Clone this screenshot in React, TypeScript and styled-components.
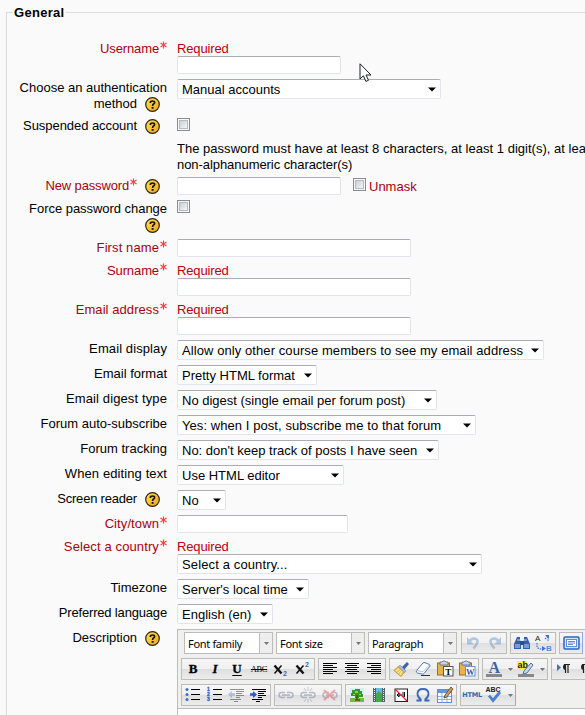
import React from "react";
import styled, { createGlobalStyle, css } from "styled-components";

const GlobalStyle = createGlobalStyle`
  *, *::before, *::after { box-sizing: border-box; }
  body {
    margin: 0;
    background: #fafafa;
    color: #000;
    font: 13px/16px "Liberation Sans", Arial, sans-serif;
    overflow: hidden;
  }
`;

const Page = styled.main`
  position: relative;
  width: 585px;
  height: 715px;
  overflow: hidden;
  padding: 4px 0 0 6px;
`;

const Fieldset = styled.fieldset`
  width: 640px;
  height: 740px;
  margin: 0;
  padding: 21px 0 0;
  border: 1px solid #ddd;
  min-width: 0;
`;

const Legend = styled.legend`
  margin-left: 6px;
  padding: 0 1px;
  height: 16px;
  line-height: 18px;
  font-weight: bold;
  letter-spacing: 0.3px;
`;

const Row = styled.div<{ $h: number }>`
  display: flex;
  height: ${(p) => p.$h}px;
`;

const Label = styled.div<{ $required?: boolean; $drop?: number; $ls?: number }>`
  width: 160px;
  flex: none;
  margin-right: 10px;
  padding-top: ${(p) => p.$drop ?? 1}px;
  letter-spacing: ${(p) => p.$ls ?? 0}px;
  color: ${(p) => (p.$required ? "#a9000f" : "#000")};
`;

const LabelLine = styled.div`
  display: flex;
  justify-content: flex-end;
  height: 16px;
  white-space: nowrap;
`;

const Value = styled.div`
  flex: none;
  white-space: nowrap;
`;

const Inline = styled.div`
  display: flex;
  align-items: flex-start;
`;

const ErrorText = styled.div`
  height: 15px;
  line-height: 16px;
  color: #b90010;
  letter-spacing: -0.15px;
`;

const Note = styled.div<{ $ls?: number }>`
  letter-spacing: ${(p) => p.$ls ?? 0}px;
`;

const fieldBox = css`
  background: #fff;
  border: 1px solid #e1e4ec;
  border-top-color: #abadb3;
  border-radius: 2px;
`;

const TextInput = styled.input<{ $w: number }>`
  ${fieldBox}
  display: block;
  width: ${(p) => p.$w}px;
  height: 18px;
  padding: 0 4px;
  outline: none;
`;

const SelectBox = styled.div<{ $w: number; $ls?: number }>`
  ${fieldBox}
  display: flex;
  align-items: center;
  justify-content: space-between;
  width: ${(p) => p.$w}px;
  height: 20px;
  padding: 1px 4px 0;
  letter-spacing: ${(p) => p.$ls ?? 0}px;
`;

const CheckFrame = styled.span`
  flex: none;
  display: block;
  width: 13px;
  height: 13px;
  padding: 1px;
  border: 1px solid #8a8b8d;
  background: #f8f8f8;
  &::after {
    content: "";
    display: block;
    width: 9px;
    height: 9px;
    border: 1px solid #b4bac2;
    background: linear-gradient(135deg, #cbcfd5, #f6f6f6);
  }
`;

const UnmaskLabel = styled.span`
  display: flex;
  gap: 3px;
  margin: 1px 0 0 12px;
  color: #a9000f;
`;

const UnmaskText = styled.span`
  padding-top: 1px;
`;

const HelpSvg = styled.svg`
  flex: none;
  width: 15px;
  height: 15px;
  margin: 1px 7px 0 8px;
`;

const StarSvg = styled.svg`
  flex: none;
  width: 8px;
  height: 8px;
`;

function Help() {
  return (
    <HelpSvg viewBox="0 0 15 15">
      <defs>
        <linearGradient id="gold" x1="0" y1="0" x2="1" y2="1">
          <stop offset="0" stopColor="#ffe35a" />
          <stop offset="1" stopColor="#f0a31c" />
        </linearGradient>
      </defs>
      <circle cx="7.5" cy="7.5" r="6.8" fill="url(#gold)" stroke="#2c230b" strokeWidth="1.2" />
      <path d="M5.4 6V5.2Q5.4 4 7.5 4T9.6 5.5Q9.6 6.5 8.5 7.1Q7.6 7.6 7.6 8.9" fill="none" stroke="#1a1608" strokeWidth="1.7" />
      <path d="M6.6 10h2v1.8h-2z" fill="#1a1608" />
    </HelpSvg>
  );
}

function Star() {
  return (
    <StarSvg viewBox="0 0 8 8">
      <path d="M4.5 .5V7.5M1.5 2L7.5 6M7.5 2L1.5 6" stroke="#ff3b3b" strokeWidth="1.1" fill="none" />
    </StarSvg>
  );
}

function Arrow() {
  return (
    <svg width="8" height="5" viewBox="0 0 8 5">
      <path d="M0 .4H8L4 4.6Z" fill="#000" />
    </svg>
  );
}

type SelectProps = { w: number; ls?: number; children: React.ReactNode };
function Select({ w, ls, children }: SelectProps) {
  return (
    <SelectBox $w={w} $ls={ls}>
      <span>{children}</span>
      <Arrow />
    </SelectBox>
  );
}

type FieldProps = {
  h: number;
  label?: string[];
  required?: boolean;
  help?: boolean;
  drop?: number;
  ls?: number;
  children?: React.ReactNode;
};
function Field({ h, label = [], required, help, drop, ls, children }: FieldProps) {
  return (
    <Row $h={h}>
      <Label $required={required} $drop={drop} $ls={ls}>
        {label.map((line, i) => (
          <LabelLine key={i}>
            {line}
            {required && <Star />}
            {help && i === label.length - 1 && <Help />}
          </LabelLine>
        ))}
      </Label>
      <Value>{children}</Value>
    </Row>
  );
}

/* ---------- rich text editor ---------- */

const Editor = styled.div`
  width: 470px;
  height: 110px;
  border: 1px solid #bbb;
  background: #fff;
`;

const Toolbars = styled.div`
  height: 79px;
  padding-top: 2px;
  display: flex;
  flex-direction: column;
  gap: 4px;
  background: #f0f0ee;
  border-bottom: 1px solid #bbb;
`;

const Bar = styled.div<{ $indent?: number }>`
  display: flex;
  gap: 3px;
  height: 22px;
  padding-left: ${(p) => p.$indent ?? 3}px;
`;

const Group = styled.div<{ $push?: boolean; $accent?: boolean }>`
  flex: none;
  display: flex;
  height: 22px;
  margin-left: ${(p) => (p.$push ? 1 : 0)}px;
  border: 1px solid #bcbcbc;
  border-right-color: ${(p) => (p.$accent ? "#8fa9d8" : "#bcbcbc")};
  background: linear-gradient(#f6f6f6 0, #f0f0f0 48%, #dfdfdf 52%, #ececec 100%);
`;

const Tool = styled.span<{ $dim?: boolean }>`
  flex: none;
  display: flex;
  width: 22px;
  height: 20px;
  align-items: center;
  justify-content: center;
  opacity: ${(p) => (p.$dim ? 0.4 : 1)};
`;

const Drop = styled.span`
  flex: none;
  width: 10px;
  display: flex;
  align-items: center;
  justify-content: center;
`;

const ListBox = styled.div`
  flex: none;
  display: flex;
  width: 89px;
  height: 22px;
  border: 1px solid #bcbcbc;
  background: #fff;
  font: 11px/21px "Noto Sans", "Open Sans", sans-serif;
  letter-spacing: -0.32px;
`;

const ListText = styled.span`
  flex: 1;
  padding-left: 3px;
  line-height: 22px;
`;

const ListArrow = styled.span`
  width: 13px;
  display: flex;
  align-items: center;
  justify-content: center;
  border-left: 1px solid #bcbcbc;
  background: #eee;
`;

const Glyph = styled.span<{ $kind: "b" | "i" | "u" }>`
  font: bold 13px/18px "Liberation Serif", serif;
  -webkit-text-stroke: 0.3px #000;
  ${(p) => p.$kind === "i" && "font-style: italic;"}
  ${(p) => p.$kind === "u" && "text-decoration: underline; text-underline-offset: 2px;"}
`;

const Strike = styled.span`
  font: 8.5px/12px "Liberation Serif", serif;
  letter-spacing: -0.4px;
  text-decoration: line-through;
`;

const HtmlMark = styled.span`
  font: bold 6.5px/10px "DejaVu Sans", sans-serif;
  letter-spacing: -0.2px;
  color: #3664ad;
`;

function SmallArrow() {
  return (
    <svg width="5" height="3" viewBox="0 0 5 3">
      <path d="M0 0H5L2.5 3Z" fill="#777" />
    </svg>
  );
}

function Icon({ children }: { children: React.ReactNode }) {
  return (
    <svg width="20" height="20" viewBox="0 0 20 20" fill="none">
      {children}
    </svg>
  );
}

function Align({ kind }: { kind: "left" | "center" | "right" }) {
  const widths = [14, 10, 14, 10, 14, 10];
  return (
    <Icon>
      {widths.map((w, i) => {
        const x = kind === "left" ? 3 : kind === "center" ? 3 + (14 - w) / 2 : 17 - w;
        return <rect key={i} x={x} y={4 + i * 2} width={w} height="1" fill="#000" />;
      })}
    </Icon>
  );
}

function Script({ up }: { up?: boolean }) {
  return (
    <Icon>
      <path d="M3.5 6.5l7 8" stroke="#111" strokeWidth="2.4" />
      <path d="M10.5 6.5l-7 8" stroke="#111" strokeWidth="1.5" />
      <text x="12" y={up ? 8 : 17} fontSize="7" fontWeight="bold" fontFamily="Liberation Sans" fill="#3367c0">2</text>
    </Icon>
  );
}

function BulletList({ numbered }: { numbered?: boolean }) {
  return (
    <Icon>
      {[4, 9, 14].map((y, i) => (
        <React.Fragment key={y}>
          {numbered ? (
            <text x="2" y={y + 2.4} fontSize="5" fontWeight="bold" fontFamily="Liberation Sans" stroke="#2f62bd" strokeWidth=".3" fill="#2f62bd">{i + 1}</text>
          ) : (
            <circle cx="4" cy={y + 0.5} r="1.5" fill="#3a6fc9" />
          )}
          <rect x="8" y={y} width="9" height="1" fill="#000" />
        </React.Fragment>
      ))}
    </Icon>
  );
}

function Indent({ out }: { out?: boolean }) {
  return (
    <Icon>
      <path d="M3 4.5H17M9 6.5H17M9 8.5H15M9 10.5H17M9 12.5H13M3 14.5H14M7 16.5H11" stroke="#000" strokeWidth="1" />
      {out ? <path d="M1 9.5L5 6v2.2h3v2.6H5V13Z" fill="#477bd1" /> : <path d="M8 9.5L4 6v2.2H1v2.6h3V13Z" fill="#235bd0" />}
    </Icon>
  );
}

function Chain({ mode }: { mode: "link" | "anchor" | "cut" }) {
  return (
    <Icon>
      <path d="M9 7.5H5.5a2.5 2.5 0 0 0 0 5H9M11 7.5h3.5a2.5 2.5 0 0 1 0 5H11M6 10h8" stroke="#5b6f92" strokeWidth="1.5" />
      {mode === "anchor" && <path d="M6 3l2 3M10 2v4M14 3l-2 3M6 17l2-3M10 18v-4M14 17l-2-3" stroke="#6d82a5" />}
      {mode === "cut" && <path d="M4 5l11 10M15 5L4 15" stroke="#f22d2d" strokeWidth="2" />}
    </Icon>
  );
}

function Undo({ redo }: { redo?: boolean }) {
  return (
    <Icon>
      <g transform={redo ? "translate(20 0) scale(-1 1)" : undefined}>
        <path d="M6 9Q9 4 13 6T10.5 15.5" stroke="#5285c4" strokeWidth="2.4" />
        <path d="M4 4v7.5h7Z" fill="#5285c4" />
      </g>
    </Icon>
  );
}

function Binoculars() {
  return (
    <Icon>
      <path d="M5 4h3v3l1 2v7H2v-5ZM12 4h3l3 7v5h-7V9l1-2Z" fill="#325fa6" />
      <path d="M8 8h4v4H8z" fill="#284f90" />
      <path d="M5 7h3M12 7h3M3 12h5M12 12h5M3 14h5M12 14h5" stroke="#c2d8f5" />
    </Icon>
  );
}

function Replace() {
  return (
    <Icon>
      <text x="1" y="8" fontSize="8" fontFamily="Liberation Sans" fill="#222">A</text>
      <text x="12" y="18" fontSize="8" fontWeight="bold" fontFamily="Liberation Sans" fill="#5a8ce0">B</text>
      <path d="M3 10v4q1 2 5 2M11 6l3-3v6" stroke="#3a75da" strokeWidth="1.2" strokeDasharray="1.5 1" />
      <path d="M11 2h4v4ZM8 13v5l4-2.5Z" fill="#3a75da" />
    </Icon>
  );
}

function FullScreen() {
  return (
    <Icon>
      <rect x="3" y="4" width="15" height="12" rx="1" fill="#d2e3fa" stroke="#2f67bd" strokeWidth="1.5" />
      <rect x="5.5" y="6.5" width="10" height="7" fill="#fff" stroke="#5b90df" />
      <path d="M7 8.5h7M7 10h7M7 11.5h5" stroke="#3a75ce" strokeWidth=".8" />
    </Icon>
  );
}

function Broom() {
  return (
    <Icon>
      <path d="M11 8l5-5 2 2-5 6Z" fill="#3f63a5" />
      <path d="M9 6l6 6-2 2-6-6Z" fill="#a9bbdc" stroke="#6079a9" strokeWidth=".5" />
      <path d="M7 7.5l6 6-3 4-7-6Z" fill="#efc75b" stroke="#b88724" strokeWidth=".7" />
      <path d="M5 12l3-2M7 14l3-3M9 16l2-4" stroke="#fff1b0" />
    </Icon>
  );
}

function Eraser() {
  return (
    <Icon>
      <path d="M3.5 11.5L10 4q1-.8 2-.3l4 1.6q1.600.7.8 2L11 14.500q-.6.700-1.500.6L4.500 14q-2-.8-1-2.500Z" fill="#fff" stroke="#5279b7" />
      <path d="M3.500 11.500l6.500 1.200 6.500-7" stroke="#a6c1e8" />
      <path d="M8 16.500h9" stroke="#333" />
    </Icon>
  );
}

function Paste({ word }: { word?: boolean }) {
  return (
    <Icon>
      <rect x="2.5" y="4" width="12" height="12" fill="#eab14c" stroke="#a66f16" />
      <path d="M5 3h2l1-1h2l1 1h2v3H5Z" fill="#ccd4e1" stroke="#596780" strokeWidth=".8" />
      <rect x="8.5" y="7.5" width="9.5" height="9.5" fill="#fff" stroke={word ? "#6a92d5" : "#555"} />
      <text x={word ? 9 : 10.2} y="15.5" fontSize={word ? 8.5 : 9} fontWeight="bold" fontFamily="Liberation Serif" fill={word ? "#2859b1" : "#000"}>{word ? "W" : "T"}</text>
    </Icon>
  );
}

function ColorA() {
  return (
    <Icon>
      <text x="4.5" y="14" fontSize="16" fontWeight="bold" fontFamily="Liberation Serif" fill="#3f65a1">A</text>
      <rect x="2" y="15" width="16" height="3" fill="#888" />
    </Icon>
  );
}

function Highlight() {
  return (
    <Icon>
      <rect x="1" y="2" width="10" height="9" fill="#ffef4a" />
      <text x="1.5" y="9" fontSize="9" fontWeight="bold" fontFamily="Liberation Sans" fill="#222">ab</text>
      <path d="M8 12l7-8 2 2-6 8-4 1Z" fill="#c7d9ee" stroke="#4f6f9d" />
      <rect x="2" y="15" width="16" height="3" fill="#888" />
    </Icon>
  );
}

function Pilcrow({ rtl }: { rtl?: boolean }) {
  return (
    <Icon>
      {!rtl && <path d="M4 5v7l4-3.5Z" fill="#3c72c2" />}
      <path d={rtl ? "M9 5a3 3 0 0 0 0 6Z" : "M13 5a3 3 0 0 0 0 6Z"} fill="#222" />
      <path d={rtl ? "M7 5.5h6M8.5 5v9M11 5v9" : "M11 5.5h6M12.5 5v9M15 5v9"} stroke="#222" strokeWidth="1.2" />
    </Icon>
  );
}

function Picture() {
  return (
    <Icon>
      <path d="M3 3h14v14H3z" fill="#d7edfb" />
      <path d="M3 13h14v4H3z" fill="#72bc3b" />
      <path d="M5 5h3V4h5v2h2v3h1v3h-4v1H8v-2H4V8h1Z" fill="#36962b" />
      <path d="M8 6h3v2H8zM6 9h2v1H6zM12 9h2v1h-2z" fill="#96d33c" />
      <path d="M10 10v5M8 15h5" stroke="#704710" strokeWidth="1.6" />
    </Icon>
  );
}

function Film() {
  return (
    <Icon>
      <path d="M4 3h12v14H4z" fill="#50626a" />
      <path d="M7 3h6v14H7z" fill="#5fbee2" />
      <path d="M7 9l3-3 3 3v8H7z" fill="#45a64e" />
      <path d="M5.5 3v14M14.5 3v14" stroke="#e5eee7" strokeDasharray="1 1" />
    </Icon>
  );
}

function NoBreak() {
  return (
    <Icon>
      <rect x="4" y="4" width="12.5" height="12.5" fill="#fff" stroke="#222" />
      <path d="M6 10h5M6 10l2-2v4ZM12 7v5M13.5 7v5" stroke="#111" strokeWidth="1" />
      <path d="M4.5 4.5l11.5 11.5" stroke="#e8202e" strokeWidth="1.3" />
    </Icon>
  );
}

function Omega() {
  return (
    <Icon>
      <path d="M3.5 15.5h4.2v-1.2Q4.5 12 4.5 8.8 4.5 4 10 4t5.5 4.8Q15.5 12 12.3 14.3v1.2h4.2" stroke="#3768bb" strokeWidth="1.8" />
    </Icon>
  );
}

function TablePencil() {
  return (
    <Icon>
      <rect x="2.5" y="4.5" width="14" height="13" fill="#fff" stroke="#5f8fd0" />
      <path d="M3 5h13v3H3z" fill="#6398dd" />
      <path d="M3 11.5h13M3 14.5h13M7 8v9M12 8v9" stroke="#8db0df" />
      <path d="M9 13l1-3 6-8 2 2-6 8Z" fill="#d49b55" stroke="#56422c" strokeWidth=".8" />
    </Icon>
  );
}

function SpellCheck() {
  return (
    <Icon>
      <text x="1.5" y="7" fontSize="7" fontWeight="bold" fontFamily="Liberation Sans" fill="#222">ABC</text>
      <path d="M5 10.500l4 5 7-8.500" stroke="#4b7fd1" strokeWidth="2.800" />
    </Icon>
  );
}

function ListSelect({ children }: { children: React.ReactNode }) {
  return (
    <ListBox>
      <ListText>{children}</ListText>
      <ListArrow><SmallArrow /></ListArrow>
    </ListBox>
  );
}

function RichEditor() {
  return (
    <Editor>
      <Toolbars>
        <Bar $indent={6}>
          <ListSelect>Font family</ListSelect>
          <ListSelect>Font size</ListSelect>
          <ListSelect>Paragraph</ListSelect>
          <Group $push>
            <Tool $dim><Undo /></Tool>
            <Tool $dim><Undo redo /></Tool>
          </Group>
          <Group>
            <Tool><Binoculars /></Tool>
            <Tool><Replace /></Tool>
          </Group>
          <Group $accent><Tool><FullScreen /></Tool></Group>
        </Bar>
        <Bar>
          <Group>
            <Tool><Glyph $kind="b">B</Glyph></Tool>
            <Tool><Glyph $kind="i">I</Glyph></Tool>
            <Tool><Glyph $kind="u">U</Glyph></Tool>
            <Tool><Strike>ABC</Strike></Tool>
            <Tool><Script /></Tool>
            <Tool><Script up /></Tool>
          </Group>
          <Group>
            <Tool><Align kind="left" /></Tool>
            <Tool><Align kind="center" /></Tool>
            <Tool><Align kind="right" /></Tool>
          </Group>
          <Group>
            <Tool><Broom /></Tool>
            <Tool><Eraser /></Tool>
            <Tool><Paste /></Tool>
            <Tool><Paste word /></Tool>
          </Group>
          <Group>
            <Tool><ColorA /></Tool>
            <Drop><SmallArrow /></Drop>
            <Tool><Highlight /></Tool>
            <Drop><SmallArrow /></Drop>
          </Group>
          <Group>
            <Tool><Pilcrow /></Tool>
            <Tool><Pilcrow rtl /></Tool>
          </Group>
        </Bar>
        <Bar>
          <Group>
            <Tool><BulletList /></Tool>
            <Tool><BulletList numbered /></Tool>
            <Tool $dim><Indent out /></Tool>
            <Tool><Indent /></Tool>
          </Group>
          <Group>
            <Tool $dim><Chain mode="link" /></Tool>
            <Tool $dim><Chain mode="anchor" /></Tool>
            <Tool $dim><Chain mode="cut" /></Tool>
          </Group>
          <Group>
            <Tool><Picture /></Tool>
            <Tool><Film /></Tool>
            <Tool><NoBreak /></Tool>
            <Tool><Omega /></Tool>
            <Tool><TablePencil /></Tool>
          </Group>
          <Group $accent>
            <Tool><HtmlMark>HTML</HtmlMark></Tool>
            <Tool><SpellCheck /></Tool>
            <Drop><SmallArrow /></Drop>
          </Group>
        </Bar>
      </Toolbars>
    </Editor>
  );
}

const Pointer = styled.svg`
  position: absolute;
  left: 359px;
  top: 63px;
  width: 13px;
  height: 20px;
`;

export default function App() {
  return (
    <Page>
      <GlobalStyle />
      <Fieldset>
        <Legend>General</Legend>
        <Field h={38} drop={0} label={["Username"]} required ls={-0.12}>
          <ErrorText>Required</ErrorText>
          <TextInput $w={164} />
        </Field>
        <Field h={39} label={["Choose an authentication", "method"]} help>
          <Select w={264}>Manual accounts</Select>
        </Field>
        <Field h={23} drop={0} label={["Suspended account"]} help ls={-0.06}>
          <CheckFrame />
        </Field>
        <Field h={36}>
          <Note $ls={0.02}>The password must have at least 8 characters, at least 1 digit(s), at lea</Note>
          <Note $ls={-0.06}>non-alphanumeric character(s)</Note>
        </Field>
        <Field h={23} label={["New password"]} required help ls={-0.15}>
          <Inline>
            <TextInput $w={164} />
            <UnmaskLabel>
              <CheckFrame />
              <UnmaskText>Unmask</UnmaskText>
            </UnmaskLabel>
          </Inline>
        </Field>
        <Field h={39} label={["Force password change", ""]} help ls={-0.04}>
          <CheckFrame />
        </Field>
        <Field h={24} label={["First name"]} required ls={0.1}>
          <TextInput $w={234} />
        </Field>
        <Field h={39} drop={0} label={["Surname"]} required ls={-0.1}>
          <ErrorText>Required</ErrorText>
          <TextInput $w={234} />
        </Field>
        <Field h={38} drop={0} label={["Email address"]} required ls={0.07}>
          <ErrorText>Required</ErrorText>
          <TextInput $w={234} />
        </Field>
        <Field h={25} label={["Email display"]} ls={0.1}>
          <Select w={367} ls={0.08}>Allow only other course members to see my email address</Select>
        </Field>
        <Field h={25} label={["Email format"]}>
          <Select w={140}>Pretty HTML format</Select>
        </Field>
        <Field h={25} label={["Email digest type"]} ls={0.12}>
          <Select w={260}>No digest (single email per forum post)</Select>
        </Field>
        <Field h={25} label={["Forum auto-subscribe"]}>
          <Select w={299} ls={0.07}>Yes: when I post, subscribe me to that forum</Select>
        </Field>
        <Field h={25} label={["Forum tracking"]}>
          <Select w={262}>No: don't keep track of posts I have seen</Select>
        </Field>
        <Field h={25} label={["When editing text"]} ls={0.1}>
          <Select w={167}>Use HTML editor</Select>
        </Field>
        <Field h={25} label={["Screen reader"]} help ls={-0.2}>
          <Select w={49}>No</Select>
        </Field>
        <Field h={24} label={["City/town"]} required ls={0.1}>
          <TextInput $w={171} />
        </Field>
        <Field h={40} drop={0} label={["Select a country"]} required ls={0.12}>
          <ErrorText>Required</ErrorText>
          <Select w={305} ls={0.13}>Select a country...</Select>
        </Field>
        <Field h={25} label={["Timezone"]}>
          <Select w={132}>Server's local time</Select>
        </Field>
        <Field h={25} label={["Preferred language"]} ls={-0.17}>
          <Select w={96}>English (en)</Select>
        </Field>
        <Field h={111} label={["Description"]} help ls={-0.05}>
          <RichEditor />
        </Field>
      </Fieldset>
      <Pointer viewBox="0 0 13 20">
        <path d="M1 .8V16l3.400-3.200 2.500 5.600 2.600-1.100L7 12h5Z" fill="#fff" stroke="#1c1c2a" strokeWidth="1" />
      </Pointer>
    </Page>
  );
}
